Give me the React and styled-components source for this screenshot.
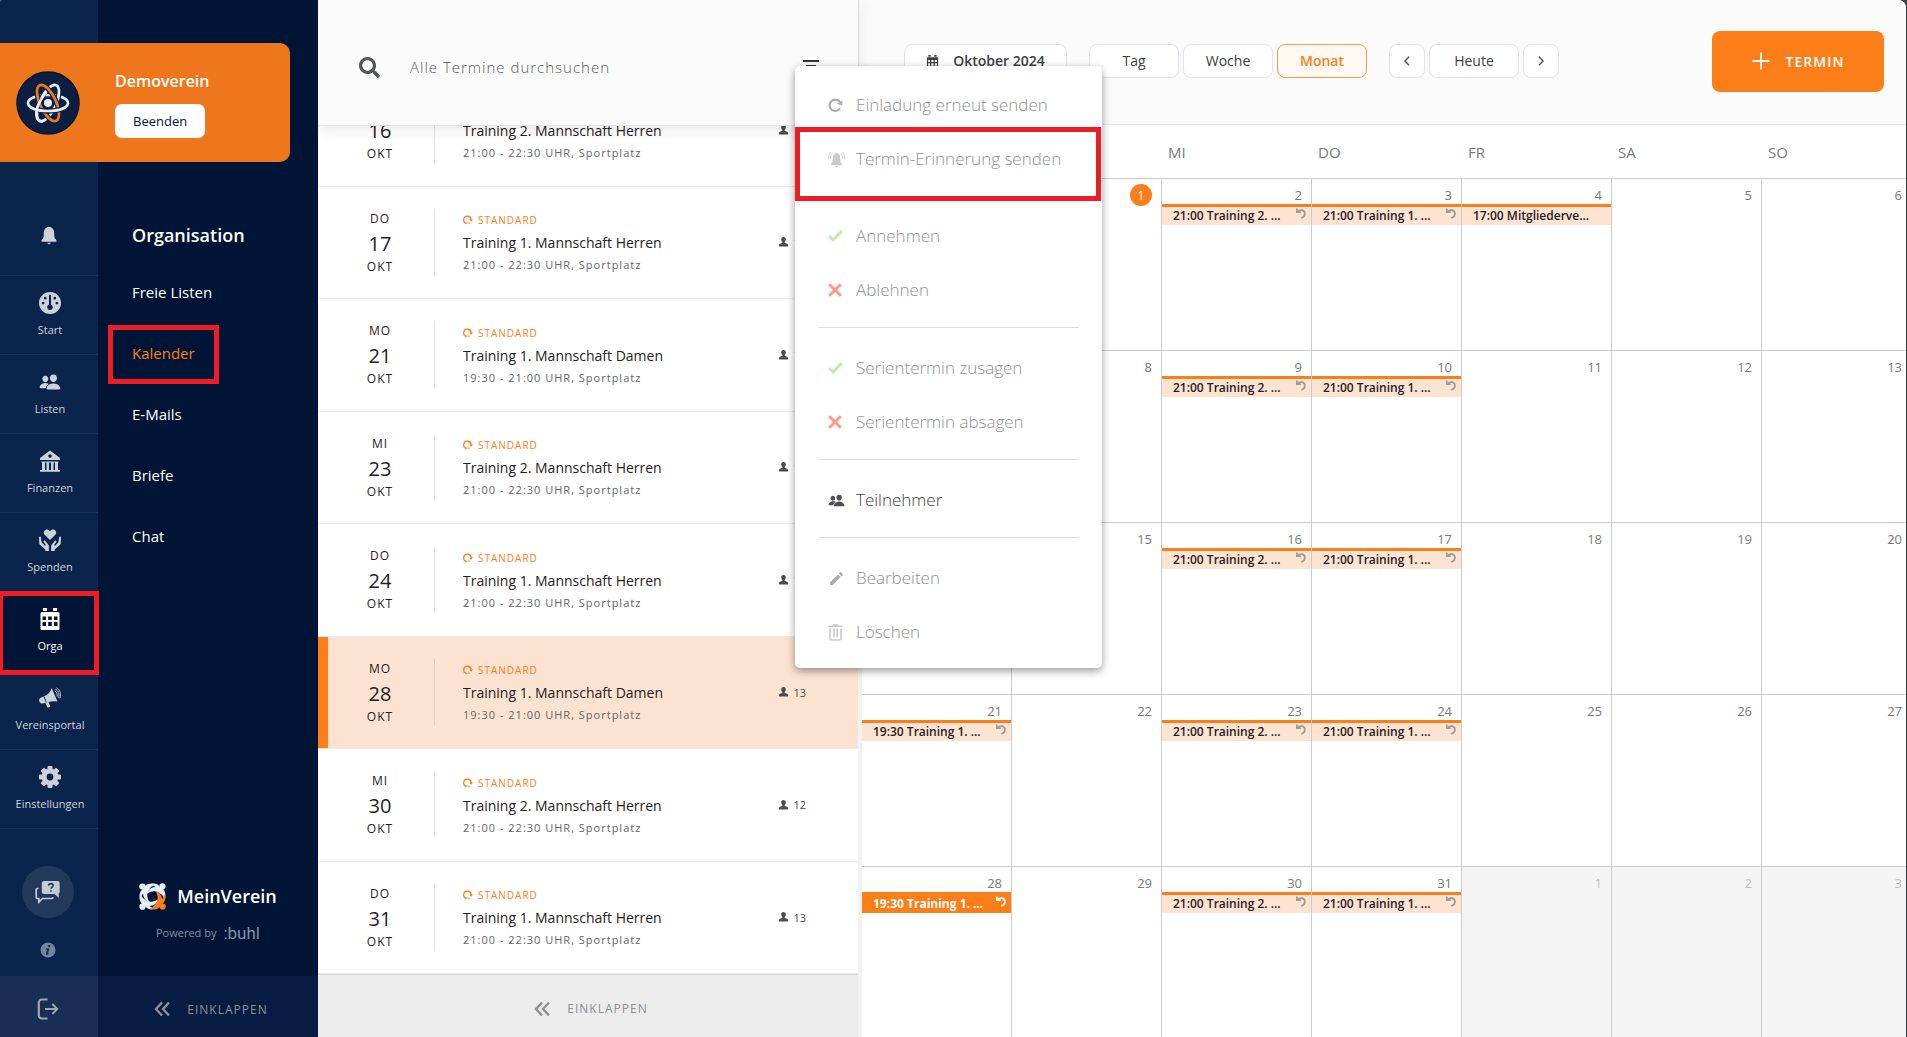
import React from "react";
import styled, { createGlobalStyle, css } from "styled-components";
import { FaSearch } from "react-icons/fa";
import { FaGauge } from "react-icons/fa6";
import { IoPeople } from "react-icons/io5";
import { MdCreate } from "react-icons/md";

const c = {
  navy: "#001535",
  rail: "#0b244c",
  orange: "#fb7e18",
  peach: "#fce3d1",
  line: "#cccccc",
  red: "#ee1c25",
  text: "#1f2124",
};

const GlobalStyle = createGlobalStyle`
  *, *::before, *::after { box-sizing: border-box; }
  body {
    margin: 0;
    background: #3b3d3e;
    font-family: "Open Sans", "Noto Sans", sans-serif;
    font-size: 15px;
    color: ${c.text};
  }
  button, input { font: inherit; color: inherit; }
  button { background: none; border: 0; padding: 0; cursor: pointer; }
  a { color: inherit; text-decoration: none; }
  ul { list-style: none; margin: 0; padding: 0; }
  svg { display: block; flex: none; }
`;

/* ---------- icons ---------- */

const Bell = ({ size = 18, waves }) => (
  <svg width={size} height={size} viewBox="0 0 24 24" fill="currentColor" aria-hidden="true">
    <path d="M12 2c-4 .4-6 3.400-6.200 7.200L5.500 15 3 18.500V20h18v-1.500L18.500 15l-.3-5.800C18 5.400 16 2.400 12 2z" transform={waves ? "translate(1.800 1) scale(.85 .95)" : undefined} />
    <path d="M9.500 21.300h5L12 23.500z" />
    {waves && (
      <g fill="none" stroke="currentColor" strokeWidth="1.200">
        <path d="M3.500 1.500C1.500 4 .5 7.500.7 12M5.800 3C4 5 3.200 8 3.300 11M20.500 1.500c2 2.500 3 6 2.800 10.500M18.200 3c1.800 2 2.600 5 2.500 8" />
      </g>
    )}
  </svg>
);

const Bank = () => (
  <svg width="22" height="22" viewBox="0 0 22 22" fill="currentColor" aria-hidden="true">
    <path fillRule="evenodd" d="M11 0.500 1 8v2h20V8zM11 4.300a1.800 1.800 0 1 1 0 3.600 1.800 1.800 0 0 1 0-3.600z" />
    <path d="M2.500 11.500h17v1h-17zM3 12h3v8H3zM7.500 12h2.500v8H7.500zM12 12h2.500v8H12zM16 12h3v8h-3zM1 20h20v1.700H1z" />
  </svg>
);

const HeartHands = () => (
  <svg width="22" height="22" viewBox="0 0 22 22" fill="currentColor" aria-hidden="true">
    <path d="M11 11 5.700 5.800C4.300 4.300 4.600 1.900 6.300.900 8 .1 9.900.7 11 2.300 12.100.7 14 .1 15.700.9c1.700 1 2 3.400.6 4.900z" />
    <path d="M0 8.300c.1-.9 1.600-1 1.900 0l.7 5 3.300 3.400 1-.7-2.200-3c-.5-.9.7-1.900 1.500-1.100l3 3.600c.5.700.7 1.300.7 2.200V22H6.300v-1.500L.9 15.800C.6 15.400.4 15 .3 14.500z" />
    <path d="M22 8.300c-.1-.9-1.600-1-1.900 0l-.7 5-3.300 3.400-1-.7 2.200-3c.5-.9-.7-1.900-1.500-1.100l-3 3.600c-.5.7-.7 1.300-.7 2.200V22h3.600v-1.500l5.400-4.700c.3-.4.500-.8.6-1.300z" />
  </svg>
);

const CalendarIcon = ({ size = 22 }) => (
  <svg width={size} height={size} viewBox="0 0 22 22" fill="currentColor" aria-hidden="true">
    <path d="M4 0h4v3H4zM14 0h4v3h-4z" />
    <path
      fillRule="evenodd"
      d="M3 4h16a1.500 1.500 0 0 1 1.500 1.500v15A1.500 1.500 0 0 1 19 22H3a1.500 1.500 0 0 1-1.500-1.500v-15A1.500 1.500 0 0 1 3 4zM3.500 8.500v3.500h3.500V8.500zM9.200 8.500v3.500h3.600V8.500zM15 8.500v3.500h3.500V8.500zM3.500 14v4h3.500v-4zM9.200 14v4h3.600v-4zM15 14v4h3.500v-4z"
    />
  </svg>
);

const Megaphone = () => (
  <svg width="22" height="22" viewBox="0 0 22 22" fill="currentColor" aria-hidden="true">
    <path d="M12.800 1.200 18.500 14.500c-3.500-.6-6.500-.3-9 .6l1.800 4.500-2.600 1.200-2.500-5-2.700.8C1.800 17 .2 15.200.1 13.300c0-1.600.8-2.500 2-2.900l3.200-1.100C8.500 8 11.500 4.800 12.800 1.200z" />
    <path d="M5 9.500 7.400 15.500" stroke={c.rail} strokeWidth=".9" />
    <g fill="none" stroke="currentColor" strokeWidth=".9">
      <path d="M15.800 4c2 1.200 2.800 3.200 2.300 5.600M16.500 2.200c3 1.700 4.200 4.700 3 8.500M17.500.800c3.600 2.200 5 6 3.400 10.500" />
    </g>
  </svg>
);

const Gear = () => (
  <svg width="22" height="22" viewBox="-11 -11 22 22" fill="none" aria-hidden="true">
    <circle r="5.900" stroke="currentColor" strokeWidth="5" />
    {[0, 45, 90, 135, 180, 225, 270, 315].map((a) => (
      <rect key={a} x="-2.500" y="-11" width="5" height="4.500" rx="1" fill="currentColor" transform={`rotate(${a})`} />
    ))}
  </svg>
);

const ChatHelp = () => (
  <svg width="26" height="24" viewBox="0 0 26 24" aria-hidden="true">
    <path d="M3.500 8.500H2.500c-.8 0-1.300.6-1.300 1.300v7.400c0 .8.5 1.300 1.300 1.300h1.300v3.600l3.700-3.600h9.300c.8 0 1.300-.6 1.300-1.300" fill="none" stroke="currentColor" strokeWidth="1.700" />
    <path d="M9 1h13.500A2.200 2.200 0 0 1 24.700 3.200v8.500a2.200 2.200 0 0 1-1 1.900V18l-4-4H9a2.200 2.200 0 0 1-2.200-2.200V3.200A2.200 2.200 0 0 1 9 1z" fill="currentColor" />
    <path d="M13.600 5.600c.1-1.300 1-2 2.300-2 1.300 0 2.200.7 2.200 1.800 0 1.500-2 1.600-2 3.300M16 10.300v1.500" fill="none" stroke="#22395b" strokeWidth="1.600" />
  </svg>
);

const InfoIcon = () => (
  <svg width="16" height="16" viewBox="0 0 16 16" aria-hidden="true">
    <circle cx="8" cy="8" r="7.500" fill="currentColor" />
    <path d="M9.300 2.800a1.100 1.100 0 1 1-.5 2.100 1.100 1.100 0 0 1 .5-2.100zM6 6.500h3.300L8.100 11.300c0 .5.400.4 1.300-.3-.6 1.400-3.300 2.600-3.300.7l1-4.300H5.900z" fill={c.rail} />
  </svg>
);

const Logout = () => (
  <svg width="22" height="22" viewBox="0 0 22 22" fill="none" stroke="currentColor" aria-hidden="true">
    <path d="M10.500 1.500H5a3.200 3.200 0 0 0-3.200 3.200v12.600A3.200 3.200 0 0 0 5 20.500h5.500" strokeWidth="2.200" />
    <path d="M8 11h12M15.300 6l5 5-5 5" strokeWidth="1.900" />
  </svg>
);

const Collapse = () => (
  <svg width="16" height="16" viewBox="0 0 16 16" fill="none" stroke="currentColor" strokeWidth="2.400" aria-hidden="true">
    <path d="M8 1.500 2 8l6 6.500M15 1.500 9 8l6 6.500" />
  </svg>
);

const Repeat = ({ size = 10, w = 1.8 }) => (
  <svg width={size} height={size} viewBox="0 0 14 14" fill="none" aria-hidden="true">
    <path d="M11.200 9.800A5.300 5.300 0 1 1 11.300 4" stroke="currentColor" strokeWidth={w} />
    <path d="M13.800 2.600 12.900 6.900 8 5.300z" fill="currentColor" />
  </svg>
);

/* small ring arrow beside the series label */
const Series = () => (
  <svg width="10" height="10" viewBox="0 0 10 10" fill="none" aria-hidden="true">
    <path d="M3.200 8.400A3.700 3.700 0 1 1 8.100 5.200M5.500 8.400 6.600 7.900" stroke="currentColor" strokeWidth="1.300" />
    <path d="M6.200 4.400H10L8.100 6.800zM2.200 8.800h2.200V7z" fill="currentColor" />
  </svg>
);

const Undo = () => (
  <svg width="10" height="11" viewBox="0 0 10 11" fill="none" aria-hidden="true">
    <path d="M.8.500v3.700h4" stroke="currentColor" strokeWidth="1.700" />
    <path d="M1.500 3.600C4.500 1 8.400 2 8.800 5.200c.2 2.300-1.300 4.200-3.600 4.600" stroke="currentColor" strokeWidth="1.800" />
  </svg>
);

const Person = () => (
  <svg width="9" height="10" viewBox="0 0 9 10" fill="currentColor" aria-hidden="true">
    <path d="M4.500 0C6 0 6.900 1 6.800 2.500 6.700 3.600 6.300 4.400 5.700 4.900V6l2.500.8c.6.300.8.700.8 1.400V9.500H0V8.200C0 7.500.2 7.100.8 6.800L3.300 6V4.900C2.700 4.400 2.300 3.600 2.200 2.500 2.100 1 3 0 4.500 0z" />
  </svg>
);

const Check = () => (
  <svg width="15" height="15" viewBox="0 0 15 15" fill="none" stroke="#b9f0a4" strokeWidth="3" aria-hidden="true">
    <path d="m1.200 7.200 4 3.800L13.800 2" />
  </svg>
);

const Cross = () => (
  <svg width="14" height="14" viewBox="0 0 14 14" fill="none" stroke="#fd9a8a" strokeWidth="3" aria-hidden="true">
    <path d="m1.200 1.200 11.600 11.600M12.800 1.200 1.200 12.800" />
  </svg>
);

const Trash = () => (
  <svg width="15" height="17" viewBox="0 0 15 17" fill="none" stroke="currentColor" strokeWidth="1.600" aria-hidden="true">
    <path d="M.5 2.300h14M5 1h5M2 4.500V14c0 1.200.7 2 2 2h7c1.300 0 2-.8 2-2V4.500M6 4.500V13M9.200 4.500V13" />
  </svg>
);

const Atom = () => (
  <svg width="64" height="64" viewBox="-32 -32 64 64" fill="none" strokeWidth="2.700" aria-hidden="true">
    <circle r="31" fill="#0a1f42" stroke="#0a1524" strokeWidth="1.500" />
    <g>
      <ellipse rx="20" ry="8" stroke="#e3eefb" />
      <ellipse rx="19.500" ry="8" transform="rotate(-65)" stroke="#0a1f42" strokeWidth="5" />
      <ellipse rx="19.500" ry="8" transform="rotate(-65)" stroke="#e3eefb" />
      <ellipse rx="19.500" ry="8" transform="rotate(65)" stroke="#0a1f42" strokeWidth="5" />
      <ellipse rx="19.500" ry="8" transform="rotate(65)" stroke="#ee771d" />
      <path d="M-20 0C-20 5-11 8 0 8S20 5 20 0" stroke="#0a1f42" strokeWidth="5" />
      <path d="M-20 0C-20 5-11 8 0 8S20 5 20 0" stroke="#e3eefb" />
      <path d="M-5 18.200C-13 20-13.500 8-8-1.500-6-5.500-4-8-1.500-11" stroke="#e3eefb" />
      <circle r="4" fill="#e3eefb" />
    </g>
  </svg>
);

const BrandMark = () => (
  <svg width="27" height="27" viewBox="-13.500 -13.500 27 27" aria-hidden="true">
    {[180, 270, 0, 90].map((a) => (
      <g key={a} transform={`rotate(${a})`} fill={a === 90 ? c.orange : "#e6f0fc"}>
        <circle cx="10" cy="-10.200" r="3.100" />
        <path d="M-3-11.800C1-13.800 5-13 7.500-9.500L10.500-7.500C13.300-4.500 13.500-.5 12.300 3 10.500-1.500 7-4.500 2-5.200-.5-5.400-3.500-4.500-5.500-2.800-5-6.500-1.500-9.300 3-9.500 1-11 -1-11.800-3-11.800z" />
      </g>
    ))}
  </svg>
);

const FilterIcon = () => (
  <svg width="16" height="14" viewBox="0 0 16 14" stroke="currentColor" strokeWidth="2" aria-hidden="true">
    <path d="M0 1h16M3 6h10M5 11h6" />
  </svg>
);

const Chevron = ({ flip }) => (
  <svg width="6" height="10" viewBox="0 0 6 10" fill="none" stroke="#555" strokeWidth="1.500" aria-hidden="true">
    <path d={flip ? "m1 .8 4 4.200-4 4.200" : "M5 .800 1 5l4 4.200"} />
  </svg>
);

const Plus = () => (
  <svg width="18" height="18" viewBox="0 0 18 18" stroke="currentColor" strokeWidth="1.800" aria-hidden="true">
    <path d="M9 .5v17M.5 9h17" />
  </svg>
);

/* ---------- shell ---------- */

const Shell = styled.div`
  display: flex;
  height: 100vh;
  margin-right: 1px;
  background: #fff;
  border-radius: 2px 8px 0 0;
  overflow: hidden;
`;

const Sidebar = styled.div`
  position: relative;
  display: flex;
  flex: none;
`;

const Banner = styled.section`
  position: absolute;
  top: 43px;
  left: 0;
  right: 28px;
  height: 119px;
  display: flex;
  align-items: center;
  gap: 35px;
  padding: 0 16px;
  background: #ee771d;
  border-radius: 0 10px 10px 0;
`;

const BannerBody = styled.div`
  display: flex;
  flex-direction: column;
  align-items: flex-start;
  gap: 12px;
  padding-top: 3px;
`;

const BannerName = styled.strong`
  font-size: 16px;
  line-height: 22px;
  font-weight: 600;
  color: #fff;
`;

const EndButton = styled.button`
  height: 34px;
  padding: 0 18px;
  border-radius: 7px;
  background: #fff;
  color: ${c.navy};
  font-size: 13px;
  font-weight: 500;
`;

const highlight = css`
  position: relative;
  &::after {
    content: "";
    position: absolute;
    z-index: 1;
    border: 5px solid ${c.red};
    pointer-events: none;
  }
`;

const Rail = styled.nav`
  width: 98px;
  display: flex;
  flex-direction: column;
  background: ${c.rail};
  color: #cdd2da;
`;

const RailBell = styled.button`
  height: 81px;
  margin-top: 194px;
  display: flex;
  align-items: center;
  justify-content: center;
`;

const RailItem = styled.a`
  height: 79px;
  display: flex;
  flex-direction: column;
  align-items: center;
  gap: 8px;
  padding: 16px 0 0 2px;
  border-top: 1px solid #1a3459;
  font-size: 11px;
  line-height: 16px;
  ${(p) =>
    p.$active &&
    css`
      background: ${c.navy};
      color: #fff;
      ${highlight}
      &::after {
        inset: -1px -1px -5px -2px;
      }
    `}
`;

const RailTail = styled.div`
  flex: 1;
  display: flex;
  flex-direction: column;
  align-items: center;
  justify-content: flex-end;
  gap: 24px;
  padding: 0 2px 18px 0;
  border-top: 1px solid #1a3459;
  color: #7485a0;
`;

const HelpButton = styled.button`
  width: 52px;
  height: 52px;
  display: grid;
  place-items: center;
  border-radius: 50%;
  background: #22395b;
  color: #c3cad6;
`;

const RailFooter = styled.button`
  height: 61px;
  display: grid;
  place-items: center;
  padding: 5px 2px 0 0;
  background: #182e54;
  color: #9ba5b6;
`;

const SubNav = styled.nav`
  width: 220px;
  display: flex;
  flex-direction: column;
  background: ${c.navy};
  color: #fff;
`;

const SubTitle = styled.h2`
  margin: 222px 0 13px;
  padding-left: 34px;
  font-size: 18px;
  line-height: 26px;
  font-weight: 600;
`;

const SubLink = styled.a`
  display: flex;
  align-items: center;
  height: 61px;
  padding-left: 34px;
  ${(p) =>
    p.$active &&
    css`
      color: ${c.orange};
      font-weight: 500;
      ${highlight}
      &::after {
        inset: 3px 99px -1px 10px;
      }
    `}
`;

const Brand = styled.div`
  margin-top: auto;
  padding-bottom: 31px;
  display: flex;
  flex-direction: column;
  align-items: center;
  gap: 11px;
`;

const BrandLine = styled.div`
  display: flex;
  align-items: center;
  gap: 11px;
  font-size: 18px;
  line-height: 28px;
  font-weight: 600;
`;

const Powered = styled.div`
  display: flex;
  align-items: center;
  gap: 7px;
  font-size: 11px;
  line-height: 24px;
  color: #8590a4;
`;

const Buhl = styled.span`
  font: 17px/24px Roboto, sans-serif;
`;

const FootButton = styled.button`
  display: flex;
  align-items: center;
  justify-content: center;
  gap: 17px;
  height: ${(p) => (p.$light ? 63 : 61)}px;
  flex: none;
  padding: 5px 0 0 6px;
  background: ${(p) => (p.$light ? "#ececec" : "#081c43")};
  border-top: ${(p) => (p.$light ? "1px solid #dcdcdc" : "0")};
  color: #8c8f94;
  font-size: 12px;
  letter-spacing: 1px;
`;

/* ---------- appointment list ---------- */

const ListPane = styled.section`
  position: relative;
  z-index: 1;
  flex: none;
  width: 540px;
  display: flex;
  flex-direction: column;
`;

const ListHeader = styled.header`
  position: relative;
  z-index: 1;
  flex: none;
  display: flex;
  align-items: center;
  height: 126px;
  padding: 9px 35px 0 41px;
  background: #fbfbfb;
  border-bottom: 1px solid #e2e2e2;
  box-shadow: 0 4px 16px rgba(0, 0, 0, 0.09);
`;

const SearchLabel = styled.label`
  flex: 1;
  display: flex;
  align-items: center;
  gap: 30px;
  color: #54575a;
`;

const SearchInput = styled.input`
  flex: 1;
  border: 0;
  background: none;
  outline: 0;
  padding: 0;
  font-size: 15px;
  font-weight: 300;
  letter-spacing: 1px;
  &::placeholder {
    color: #5c5e61;
    opacity: 1;
  }
`;

const MenuAnchor = styled.div`
  position: relative;
`;

const FilterButton = styled.button`
  display: grid;
  place-items: center;
  width: 24px;
  height: 24px;
  color: #333;
`;

const ListScroll = styled.div`
  flex: 1;
  min-height: 0;
  display: flex;
  flex-direction: column;
  justify-content: flex-end;
  overflow: hidden;
`;

const List = styled.ul`
  flex: none;
  display: grid;
  grid-template-rows: repeat(8, 1fr);
  min-height: 900px;
`;

const ListRow = styled.li`
  display: flex;
  align-items: center;
  padding: 0 52px 0 10px;
  border-bottom: 1px solid #ebebeb;
  box-shadow: ${(p) => (p.$active ? `inset 10px 0 ${c.orange}` : "none")};
  background: ${(p) => (p.$active ? c.peach : "#fff")};
`;

const DateBlock = styled.div`
  width: 107px;
  display: flex;
  flex-direction: column;
  align-items: center;
  padding-right: 2px;
  border-right: 1px solid ${(p) => (p.$active ? "#e8cdbb" : "#e4e4e4")};
  font-size: 12px;
  line-height: 19px;
  letter-spacing: 1px;
`;

const DateNumber = styled.span`
  padding-top: 2px;
  font-size: 20px;
  line-height: 27px;
  font-weight: 500;
  letter-spacing: 0;
`;

const RowBody = styled.div`
  flex: 1;
  padding-left: 28px;
`;

const Tag = styled.div`
  display: flex;
  align-items: center;
  gap: 5px;
  font-size: 10px;
  line-height: 20px;
  letter-spacing: 1px;
  color: ${c.orange};
`;

const RowTitle = styled.div`
  font-size: 14px;
  line-height: 26px;
  font-weight: 500;
`;

const RowTime = styled.div`
  font-size: 11px;
  line-height: 18px;
  letter-spacing: 1px;
  color: #636568;
`;

const Count = styled.div`
  display: flex;
  align-items: center;
  gap: 5px;
  font-size: 11px;
  color: #4a4c4f;
`;

/* ---------- context menu ---------- */

const Menu = styled.ul`
  position: absolute;
  z-index: 3;
  top: 11px;
  left: -4px;
  width: 307px;
  padding: 11px 0 10px;
  background: #fff;
  border-radius: 5px;
  box-shadow: 0 3px 8px rgba(0, 0, 0, 0.4);
`;

const MenuItem = styled.li`
  ${(p) =>
    p.$marked &&
    css`
      ${highlight}
      margin-bottom: 23px;
      &::after {
        inset: -4px 1px -16px 0;
      }
    `}
`;

const MenuButton = styled.button`
  width: 100%;
  height: 54px;
  display: flex;
  align-items: center;
  gap: 11px;
  padding-left: 33px;
  font-size: 17px;
  font-weight: 300;
  color: #3c3f45;
  &:disabled {
    color: #8f9193;
  }
`;

const MenuIcon = styled.span`
  width: 17px;
  padding-top: 2px;
  color: ${(p) => p.$tone};
`;

const MenuRule = styled.li`
  height: 1px;
  margin: 11px 23px 12px;
  background: #dedede;
`;

/* ---------- calendar ---------- */

const Calendar = styled.main`
  flex: 1;
  min-width: 0;
  display: flex;
  flex-direction: column;
`;

const Toolbar = styled.header`
  flex: none;
  height: 125px;
  display: flex;
  align-items: center;
  gap: 22px;
  padding: 0 22px 2px 45px;
  background: #fbfbfb;
  border: solid #e3e3e5;
  border-width: 0 0 1px 1px;
`;

const ButtonGroup = styled.div`
  display: flex;
  gap: 4px;
`;

const ToolButton = styled.button`
  display: flex;
  align-items: center;
  justify-content: center;
  gap: 14px;
  width: ${(p) => p.$w || 90}px;
  height: 34px;
  border: 1px solid ${(p) => (p.$active ? "#fc9a48" : "#e0e2ee")};
  border-radius: 8px;
  background: ${(p) => (p.$active ? "#fff8f3" : "#fff")};
  color: ${(p) => (p.$active ? c.orange : "#3e4043")};
  font-size: 14px;
  line-height: 20px;
  font-weight: ${(p) => (p.$active || p.$strong ? 600 : 400)};
`;

const NewButton = styled.button`
  margin-left: auto;
  display: flex;
  align-items: center;
  justify-content: center;
  gap: 16px;
  width: 172px;
  height: 61px;
  border-radius: 8px;
  background: ${c.orange};
  color: #fff;
  font-size: 14px;
  font-weight: 600;
  letter-spacing: 1px;
`;

const GridWrap = styled.div`
  flex: 1;
  min-height: 0;
  overflow: hidden;
  border-left: 4px solid #f2f2f2;
`;

const MonthTable = styled.table`
  width: calc(100% + 6px);
  table-layout: fixed;
  border-collapse: separate;
  border-spacing: 0;
`;

const WeekDay = styled.th`
  height: 53px;
  padding: 0 0 0 6px;
  text-align: left;
  font-size: 15px;
  font-weight: 400;
  color: #77797b;
`;

const DayCell = styled.td`
  height: 172px;
  padding: 0;
  vertical-align: top;
  border: solid ${c.line};
  border-width: 1px 1px 0 0;
  background: ${(p) => (p.$outside ? "#f4f4f4" : "#fff")};
  color: ${(p) => (p.$outside ? "#bfbfbf" : "#77797b")};
`;

const DayNumber = styled.div`
  width: max-content;
  min-width: 22px;
  height: 22px;
  margin: 5px 9px -2px auto;
  border-radius: 11px;
  font-size: 13px;
  line-height: 22px;
  text-align: ${(p) => (p.$today ? "center" : "right")};
  background: ${(p) => (p.$today ? c.orange : "transparent")};
  color: ${(p) => (p.$today ? "#fff" : "inherit")};
`;

const Event = styled.button`
  position: relative;
  width: 100%;
  height: 21px;
  display: flex;
  justify-content: space-between;
  padding: 0 5px 0 11px;
  border-top: 3px solid ${c.orange};
  background: ${(p) => (p.$selected ? c.orange : "#fde3d1")};
  color: ${(p) => (p.$selected ? "#fff" : c.text)};
  font-size: 12px;
  line-height: 17px;
  font-weight: ${(p) => (p.$selected ? 700 : 600)};
  white-space: nowrap;
  svg {
    margin-top: 1px;
    color: ${(p) => (p.$selected ? "#fff" : "#9b9b9b")};
  }
`;

/* ---------- data ---------- */

const railItems = [
  ["Start", <FaGauge size={22} />],
  ["Listen", <IoPeople size={22} />],
  ["Finanzen", <Bank />],
  ["Spenden", <HeartHands />],
  ["Orga", <CalendarIcon />],
  ["Vereinsportal", <Megaphone />],
  ["Einstellungen", <Gear />],
];

const subLinks = ["Freie Listen", "Kalender", "E-Mails", "Briefe", "Chat"];

const T2 = "Training 2. Mannschaft Herren";
const T1 = "Training 1. Mannschaft Herren";
const TD = "Training 1. Mannschaft Damen";
const late = "21:00 - 22:30 UHR, Sportplatz";
const early = "19:30 - 21:00 UHR, Sportplatz";

const appointments = [
  ["MI", 16, T2, late, 12],
  ["DO", 17, T1, late, 13],
  ["MO", 21, TD, early, 13],
  ["MI", 23, T2, late, 12],
  ["DO", 24, T1, late, 13],
  ["MO", 28, TD, early, 13],
  ["MI", 30, T2, late, 12],
  ["DO", 31, T1, late, 13],
];

const weekDays = ["MO", "DI", "MI", "DO", "FR", "SA", "SO"];

const events = {
  4: "17:00 Mitgliederve...",
};
[2, 9, 16, 23, 30].forEach((d) => (events[d] = "21:00 Training 2. ..."));
[3, 10, 17, 24, 31].forEach((d) => (events[d] = "21:00 Training 1. ..."));
[7, 14, 21, 28].forEach((d) => (events[d] = "19:30 Training 1. ..."));

const weeks = Array.from({ length: 5 }, (_, w) =>
  Array.from({ length: 7 }, (_, d) => {
    const n = w * 7 + d;
    if (n < 1) return { day: 30, outside: true };
    if (n > 31) return { day: n - 31, outside: true };
    return { day: n, event: events[n] };
  })
);

const menuEntries = [
  { label: "Einladung erneut senden", icon: <Repeat size={15} w={2} />, tone: "#a9abad" },
  { label: "Termin-Erinnerung senden", icon: <Bell size={17} waves />, tone: "#c9cacb", marked: true },
  { label: "Annehmen", icon: <Check /> },
  { label: "Ablehnen", icon: <Cross /> },
  null,
  { label: "Serientermin zusagen", icon: <Check /> },
  { label: "Serientermin absagen", icon: <Cross /> },
  null,
  { label: "Teilnehmer", icon: <IoPeople size={17} />, tone: "#4c4f55", enabled: true },
  null,
  { label: "Bearbeiten", icon: <MdCreate size={17} />, tone: "#a9abad" },
  { label: "Löschen", icon: <Trash />, tone: "#c9cacb" },
];

function ContextMenu() {
  return (
    <Menu>
      {menuEntries.map((m, i) =>
        m === null ? (
          <MenuRule key={i} role="separator" />
        ) : (
          <MenuItem key={i} $marked={m.marked}>
            <MenuButton disabled={!m.enabled}>
              <MenuIcon $tone={m.tone}>{m.icon}</MenuIcon>
              {m.label}
            </MenuButton>
          </MenuItem>
        )
      )}
    </Menu>
  );
}

export default function App() {
  return (
    <>
      <GlobalStyle />
      <Shell>
        <Sidebar>
          <Rail>
            <RailBell aria-label="Benachrichtigungen">
              <Bell size={20} />
            </RailBell>
            {railItems.map(([label, icon]) => (
              <RailItem key={label} href="#" $active={label === "Orga"}>
                {icon}
                {label}
              </RailItem>
            ))}
            <RailTail>
              <HelpButton aria-label="Hilfe">
                <ChatHelp />
              </HelpButton>
              <InfoIcon />
            </RailTail>
            <RailFooter aria-label="Abmelden">
              <Logout />
            </RailFooter>
          </Rail>
          <SubNav>
            <SubTitle>Organisation</SubTitle>
            {subLinks.map((l) => (
              <SubLink key={l} href="#" $active={l === "Kalender"}>
                {l}
              </SubLink>
            ))}
            <Brand>
              <BrandLine>
                <BrandMark />
                MeinVerein
              </BrandLine>
              <Powered>
                Powered by <Buhl>:buhl</Buhl>
              </Powered>
            </Brand>
            <FootButton>
              <Collapse />
              EINKLAPPEN
            </FootButton>
          </SubNav>
          <Banner>
            <Atom />
            <BannerBody>
              <BannerName>Demoverein</BannerName>
              <EndButton>Beenden</EndButton>
            </BannerBody>
          </Banner>
        </Sidebar>

        <ListPane>
          <ListHeader>
            <SearchLabel>
              <FaSearch size={21} />
              <SearchInput aria-label="Termine durchsuchen" placeholder="Alle Termine durchsuchen" />
            </SearchLabel>
            <MenuAnchor>
              <FilterButton aria-label="Filter">
                <FilterIcon />
              </FilterButton>
              <ContextMenu />
            </MenuAnchor>
          </ListHeader>
          <ListScroll>
            <List>
              {appointments.map(([wd, day, title, time, count]) => (
                <ListRow key={day} $active={day === 28}>
                  <DateBlock $active={day === 28}>
                    {wd}
                    <DateNumber>{day}</DateNumber>
                    OKT
                  </DateBlock>
                  <RowBody>
                    <Tag>
                      <Series />
                      STANDARD
                    </Tag>
                    <RowTitle>{title}</RowTitle>
                    <RowTime>{time}</RowTime>
                  </RowBody>
                  <Count>
                    <Person />
                    {count}
                  </Count>
                </ListRow>
              ))}
            </List>
          </ListScroll>
          <FootButton $light>
            <Collapse />
            EINKLAPPEN
          </FootButton>
        </ListPane>

        <Calendar>
          <Toolbar>
            <ToolButton $w={163} $strong>
              <CalendarIcon size={13} />
              Oktober 2024
            </ToolButton>
            <ButtonGroup>
              <ToolButton>Tag</ToolButton>
              <ToolButton>Woche</ToolButton>
              <ToolButton $active>Monat</ToolButton>
            </ButtonGroup>
            <ButtonGroup>
              <ToolButton $w={36} aria-label="Zurück">
                <Chevron />
              </ToolButton>
              <ToolButton>Heute</ToolButton>
              <ToolButton $w={36} aria-label="Weiter">
                <Chevron flip />
              </ToolButton>
            </ButtonGroup>
            <NewButton>
              <Plus />
              TERMIN
            </NewButton>
          </Toolbar>
          <GridWrap>
            <MonthTable>
              <thead>
                <tr>
                  {weekDays.map((d) => (
                    <WeekDay key={d}>{d}</WeekDay>
                  ))}
                </tr>
              </thead>
              <tbody>
                {weeks.map((week, w) => (
                  <tr key={w}>
                    {week.map((d, i) => (
                      <DayCell key={i} $outside={d.outside}>
                        <DayNumber $today={w === 0 && d.day === 1}>{d.day}</DayNumber>
                        {d.event && (
                          <Event $selected={d.day === 28}>
                            {d.event}
                            {d.day !== 4 && <Undo />}
                          </Event>
                        )}
                      </DayCell>
                    ))}
                  </tr>
                ))}
              </tbody>
            </MonthTable>
          </GridWrap>
        </Calendar>
      </Shell>
    </>
  );
}
